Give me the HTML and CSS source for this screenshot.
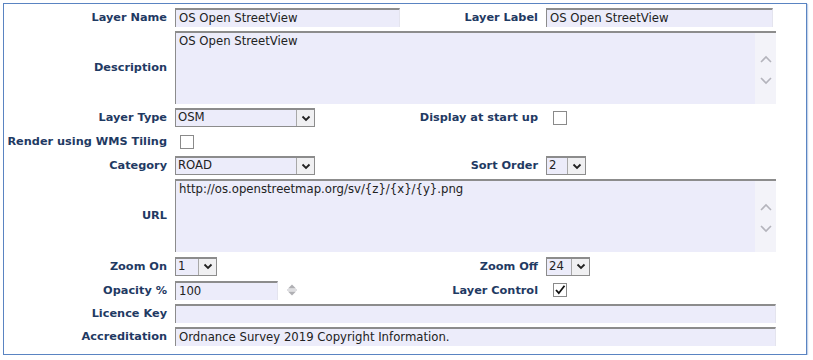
FILE: index.html
```html
<!DOCTYPE html>
<html>
<head>
<meta charset="utf-8">
<link rel="stylesheet" href="styles.css">
</head>
<body>
<div class="frame">
  <div class="form">
    <div class="lbl r1">Layer Name</div>
    <div class="cell r1"><div class="inp w225">OS Open StreetView</div></div>
    <div class="lbl r1">Layer Label</div>
    <div class="cell r1"><div class="inp w227">OS Open StreetView</div></div>

    <div class="lbl r2">Description</div>
    <div class="cell span3 r2">
      <div class="area">
        <div class="area-text">OS Open StreetView</div>
        <div class="scroll">
          <svg width="14" height="10" viewBox="0 0 14 10"><path d="M2 8 L7 3 L12 8" fill="none" stroke="#b4b4bc" stroke-width="1.6"/></svg>
          <svg width="14" height="10" viewBox="0 0 14 10"><path d="M2 2 L7 7 L12 2" fill="none" stroke="#b4b4bc" stroke-width="1.6"/></svg>
        </div>
      </div>
    </div>

    <div class="lbl r3">Layer Type</div>
    <div class="cell r3"><div class="sel w140"><span class="sel-text">OSM</span><span class="btn"><svg width="10" height="7" viewBox="0 0 10 7"><path d="M1.5 1.5 L5 5 L8.5 1.5" fill="none" stroke="#222" stroke-width="1.8"/></svg></span></div></div>
    <div class="lbl r3">Display at start up</div>
    <div class="cell r3"><div class="chk"></div></div>

    <div class="lbl r4">Render using WMS Tiling</div>
    <div class="cell r4"><div class="chk"></div></div>
    <div class="cell r4 span2"></div>

    <div class="lbl r5">Category</div>
    <div class="cell r5"><div class="sel w140"><span class="sel-text">ROAD</span><span class="btn"><svg width="10" height="7" viewBox="0 0 10 7"><path d="M1.5 1.5 L5 5 L8.5 1.5" fill="none" stroke="#222" stroke-width="1.8"/></svg></span></div></div>
    <div class="lbl r5">Sort Order</div>
    <div class="cell r5"><div class="sel w40"><span class="sel-text">2</span><span class="btn"><svg width="10" height="7" viewBox="0 0 10 7"><path d="M1.5 1.5 L5 5 L8.5 1.5" fill="none" stroke="#222" stroke-width="1.8"/></svg></span></div></div>

    <div class="lbl r6">URL</div>
    <div class="cell span3 r6">
      <div class="area">
        <div class="area-text">http://os.openstreetmap.org/sv/{z}/{x}/{y}.png</div>
        <div class="scroll">
          <svg width="14" height="10" viewBox="0 0 14 10"><path d="M2 8 L7 3 L12 8" fill="none" stroke="#b4b4bc" stroke-width="1.6"/></svg>
          <svg width="14" height="10" viewBox="0 0 14 10"><path d="M2 2 L7 7 L12 2" fill="none" stroke="#b4b4bc" stroke-width="1.6"/></svg>
        </div>
      </div>
    </div>

    <div class="lbl r7">Zoom On</div>
    <div class="cell r7"><div class="sel w42"><span class="sel-text">1</span><span class="btn"><svg width="10" height="7" viewBox="0 0 10 7"><path d="M1.5 1.5 L5 5 L8.5 1.5" fill="none" stroke="#222" stroke-width="1.8"/></svg></span></div></div>
    <div class="lbl r7">Zoom Off</div>
    <div class="cell r7"><div class="sel w44"><span class="sel-text">24</span><span class="btn"><svg width="10" height="7" viewBox="0 0 10 7"><path d="M1.5 1.5 L5 5 L8.5 1.5" fill="none" stroke="#222" stroke-width="1.8"/></svg></span></div></div>

    <div class="lbl r8">Opacity %</div>
    <div class="cell r8 opacity">
      <div class="inp w103">100</div>
      <svg class="spin" width="14" height="14" viewBox="0 0 14 14"><path d="M3 5.5 L7 1.5 L11 5.5 Z" fill="#b0b0b4"/><path d="M3 8.5 L7 12.5 L11 8.5 Z" fill="#b0b0b4"/><path d="M2 6.5 H12 M2 7.5 H12" stroke="#c8c8cc" stroke-width="0.6"/></svg>
    </div>
    <div class="lbl r8">Layer Control</div>
    <div class="cell r8"><div class="chk"><svg width="12" height="12" viewBox="0 0 12 12"><path d="M2 6 L4.8 9.2 L10.5 1.8" fill="none" stroke="#111" stroke-width="1.8"/></svg></div></div>

    <div class="lbl r9">Licence Key</div>
    <div class="cell span3 r9"><div class="inp full"></div></div>

    <div class="lbl r10">Accreditation</div>
    <div class="cell span3 r10"><div class="inp full">Ordnance Survey 2019 Copyright Information.</div></div>
  </div>
</div>
</body>
</html>
```
FILE: styles.css
```css
html, body {
  margin: 0;
  padding: 0;
  background: #ffffff;
}

body {
  font-family: "DejaVu Sans", Verdana, sans-serif;
  font-size: 11.7px;
  color: #222;
}

.frame {
  margin: 3px 0 0 3px;
  border: 1px solid #5a84c2;
  box-shadow: 1px 1px 1px rgba(90, 132, 194, 0.35);
  padding: 4px 0 0 4px;
  box-sizing: content-box;
  width: 798px;
  height: 346px;
}

.form {
  display: grid;
  grid-template-columns: 159px 225px 130px 230px;
  grid-template-rows: 19px 73px 19px 21px 19px 73px 20px 20px 19px 19px;
  column-gap: 8px;
  row-gap: 4px;
}

.lbl {
  display: flex;
  align-items: center;
  justify-content: flex-end;
  font-weight: bold;
  color: #1f3a63;
  white-space: nowrap;
  font-size: 11.3px;
}

.cell {
  display: flex;
  align-items: center;
}

.span3 { grid-column: 2 / 5; }
.span2 { grid-column: 3 / 5; }

.inp {
  height: 19px;
  box-sizing: border-box;
  background: #ececfa;
  border-top: 2px solid #8c8c8c;
  border-left: 1px solid #8c8c8c;
  border-right: 1px solid #e4e4ee;
  padding: 1px 0 0 3px;
  line-height: 15px;
  color: #222;
  white-space: nowrap;
  overflow: hidden;
}

.w225 { width: 225px; }
.w227 { width: 227px; }
.w103 { width: 103px; }
.full { width: 601px; }

.area {
  width: 601px;
  height: 73px;
  box-sizing: border-box;
  background: #ececfa;
  border-top: 2px solid #8c8c8c;
  border-left: 1px solid #8c8c8c;
  display: flex;
  align-self: stretch;
}

.area-text {
  flex: 1;
  padding: 1px 0 0 3px;
  line-height: 14px;
}

.scroll {
  width: 21px;
  background: #f3f3f9;
  display: flex;
  flex-direction: column;
  justify-content: center;
  align-items: center;
  gap: 12px;
  padding-top: 2px;
}

.sel {
  height: 19px;
  box-sizing: border-box;
  background: #ececfa;
  border: 1px solid #8c8c8c;
  border-top-width: 2px;
  display: flex;
  align-items: stretch;
}

.w140 { width: 140px; }
.w40 { width: 40px; }
.w42 { width: 42px; }
.w44 { width: 44px; }

.sel-text {
  flex: 1;
  padding-left: 2px;
  line-height: 15px;
  white-space: nowrap;
}

.btn {
  width: 18px;
  box-sizing: border-box;
  border-left: 1px solid #a8a8a8;
  background: #f0f0f2;
  display: flex;
  align-items: center;
  justify-content: center;
}

.chk {
  width: 14px;
  height: 14px;
  box-sizing: border-box;
  border: 1px solid #8a8a8a;
  background: #fff;
  margin-left: 7px;
  display: flex;
  align-items: center;
  justify-content: center;
}

.r4 .chk { margin-left: 5px; }

.opacity { gap: 7px; }
.spin { display: block; }
```
